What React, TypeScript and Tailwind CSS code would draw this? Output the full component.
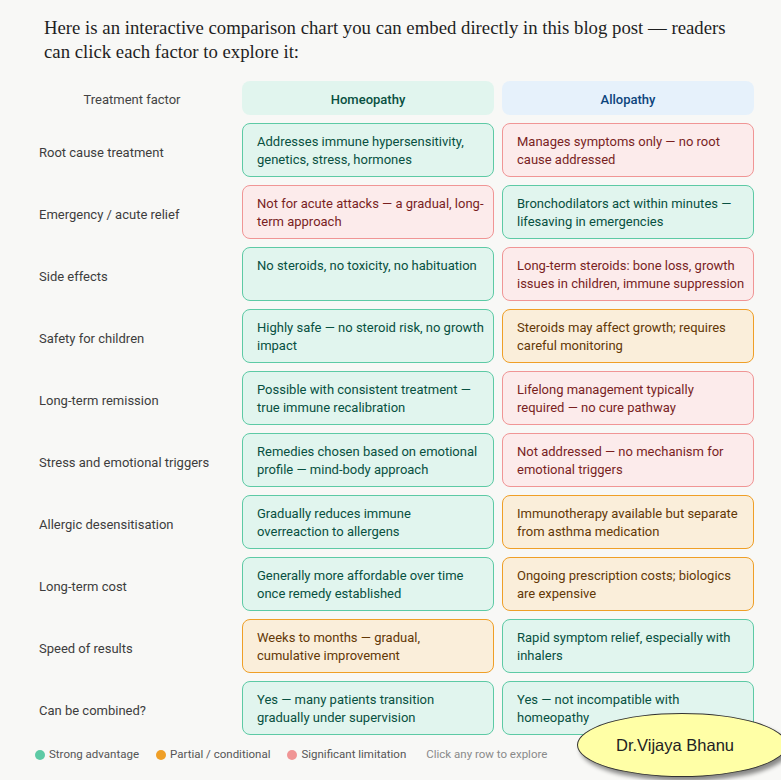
import React, { useState } from 'react';

type Level = 'good' | 'partial' | 'bad';

interface Row {
  factor: string;
  homeo: [Level, string];
  allo: [Level, string];
}

// line breaks kept as in the original chart
const rows: Row[] = [
  { factor: 'Root cause treatment', homeo: ['good', 'Addresses immune hypersensitivity,\ngenetics, stress, hormones'], allo: ['bad', 'Manages symptoms only — no root\ncause addressed'] },
  { factor: 'Emergency / acute relief', homeo: ['bad', 'Not for acute attacks — a gradual, long-\nterm approach'], allo: ['good', 'Bronchodilators act within minutes —\nlifesaving in emergencies'] },
  { factor: 'Side effects', homeo: ['good', 'No steroids, no toxicity, no habituation'], allo: ['bad', 'Long-term steroids: bone loss, growth\nissues in children, immune suppression'] },
  { factor: 'Safety for children', homeo: ['good', 'Highly safe — no steroid risk, no growth\nimpact'], allo: ['partial', 'Steroids may affect growth; requires\ncareful monitoring'] },
  { factor: 'Long-term remission', homeo: ['good', 'Possible with consistent treatment —\ntrue immune recalibration'], allo: ['bad', 'Lifelong management typically\nrequired — no cure pathway'] },
  { factor: 'Stress and emotional triggers', homeo: ['good', 'Remedies chosen based on emotional\nprofile — mind-body approach'], allo: ['bad', 'Not addressed — no mechanism for\nemotional triggers'] },
  { factor: 'Allergic desensitisation', homeo: ['good', 'Gradually reduces immune\noverreaction to allergens'], allo: ['partial', 'Immunotherapy available but separate\nfrom asthma medication'] },
  { factor: 'Long-term cost', homeo: ['good', 'Generally more affordable over time\nonce remedy established'], allo: ['partial', 'Ongoing prescription costs; biologics\nare expensive'] },
  { factor: 'Speed of results', homeo: ['partial', 'Weeks to months — gradual,\ncumulative improvement'], allo: ['good', 'Rapid symptom relief, especially with\ninhalers'] },
  { factor: 'Can be combined?', homeo: ['good', 'Yes — many patients transition\ngradually under supervision'], allo: ['good', 'Yes — not incompatible with\nhomeopathy'] },
];

const cardStyles: Record<Level, string> = {
  good: 'bg-[#e1f5ee] border-[#5dcaa5] text-[#085041]',
  partial: 'bg-[#faeeda] border-[#ef9f27] text-[#633806]',
  bad: 'bg-[#fcebeb] border-[#f09595] text-[#791f1f]',
};

const Cell: React.FC<{ level: Level; text: string; active: boolean }> = ({ level, text, active }) => (
  <div
    className={`h-[54px] whitespace-pre-line rounded-lg border pl-[14px] pr-[2px] pt-[9px] text-[13px] leading-[18px] ${cardStyles[level]} ${active ? 'ring-2 ring-black/10' : ''}`}
  >
    {text}
  </div>
);

export default function App() {
  const [active, setActive] = useState<number | null>(null);

  return (
    <div className="relative min-h-[780px] w-[781px] overflow-hidden bg-[#f8f8f6] font-['Roboto',sans-serif]">
      <p className="w-[732px] pl-[44px] pt-[16px] font-['Liberation_Serif',serif] text-[18.75px] leading-[24px] text-[#1f1f1f]">
        Here is an interactive comparison chart you can embed directly in this blog post — readers can click each factor to explore it:
      </p>

      <div className="ml-[30px] mt-[17px] grid grid-cols-[204px_252px_252px] gap-x-[8px] gap-y-[8px]">
        <div className="flex h-[34px] items-center justify-center pt-[3px] text-[13px] text-[#444]">Treatment factor</div>
        <div className="flex h-[34px] items-center justify-center rounded-lg bg-[#e1f5ee] pt-[3px] text-[13px] font-medium text-[#085041]">Homeopathy</div>
        <div className="flex h-[34px] items-center justify-center rounded-lg bg-[#e6f1fb] pt-[3px] text-[13px] font-medium text-[#0c447c]">Allopathy</div>

        {rows.map((r, i) => (
          <React.Fragment key={r.factor}>
            <button
              type="button"
              onClick={() => setActive(active === i ? null : i)}
              className="flex h-[54px] items-center pl-[9px] pt-[5px] text-left text-[13px] text-[#3d3d3d]"
            >
              {r.factor}
            </button>
            <Cell level={r.homeo[0]} text={r.homeo[1]} active={active === i} />
            <Cell level={r.allo[0]} text={r.allo[1]} active={active === i} />
          </React.Fragment>
        ))}
      </div>

      <div className="ml-[35px] mt-[11px] flex items-center gap-[17px] text-[11.5px] text-[#555]">
        <span className="flex items-center gap-[4px]"><span className="h-[10px] w-[10px] rounded-full bg-[#5dcaa5]" />Strong advantage</span>
        <span className="flex items-center gap-[4px]"><span className="h-[10px] w-[10px] rounded-full bg-[#ef9f27]" />Partial / conditional</span>
        <span className="flex items-center gap-[4px]"><span className="h-[10px] w-[10px] rounded-full bg-[#f09595]" />Significant limitation</span>
        <span className="ml-[3px] text-[#8a8a8a]">Click any row to explore</span>
      </div>

      <div className="absolute left-[577px] top-[713px] flex h-[64px] w-[210px] items-center justify-center rounded-[50%] border-[1.5px] border-[#333] bg-[#ffffa6] pr-[14px] font-['Liberation_Sans',sans-serif] text-[16.5px] text-[#222] shadow-[3px_4px_4px_rgba(0,0,0,0.45)]">
        Dr.Vijaya Bhanu
      </div>
    </div>
  );
}
